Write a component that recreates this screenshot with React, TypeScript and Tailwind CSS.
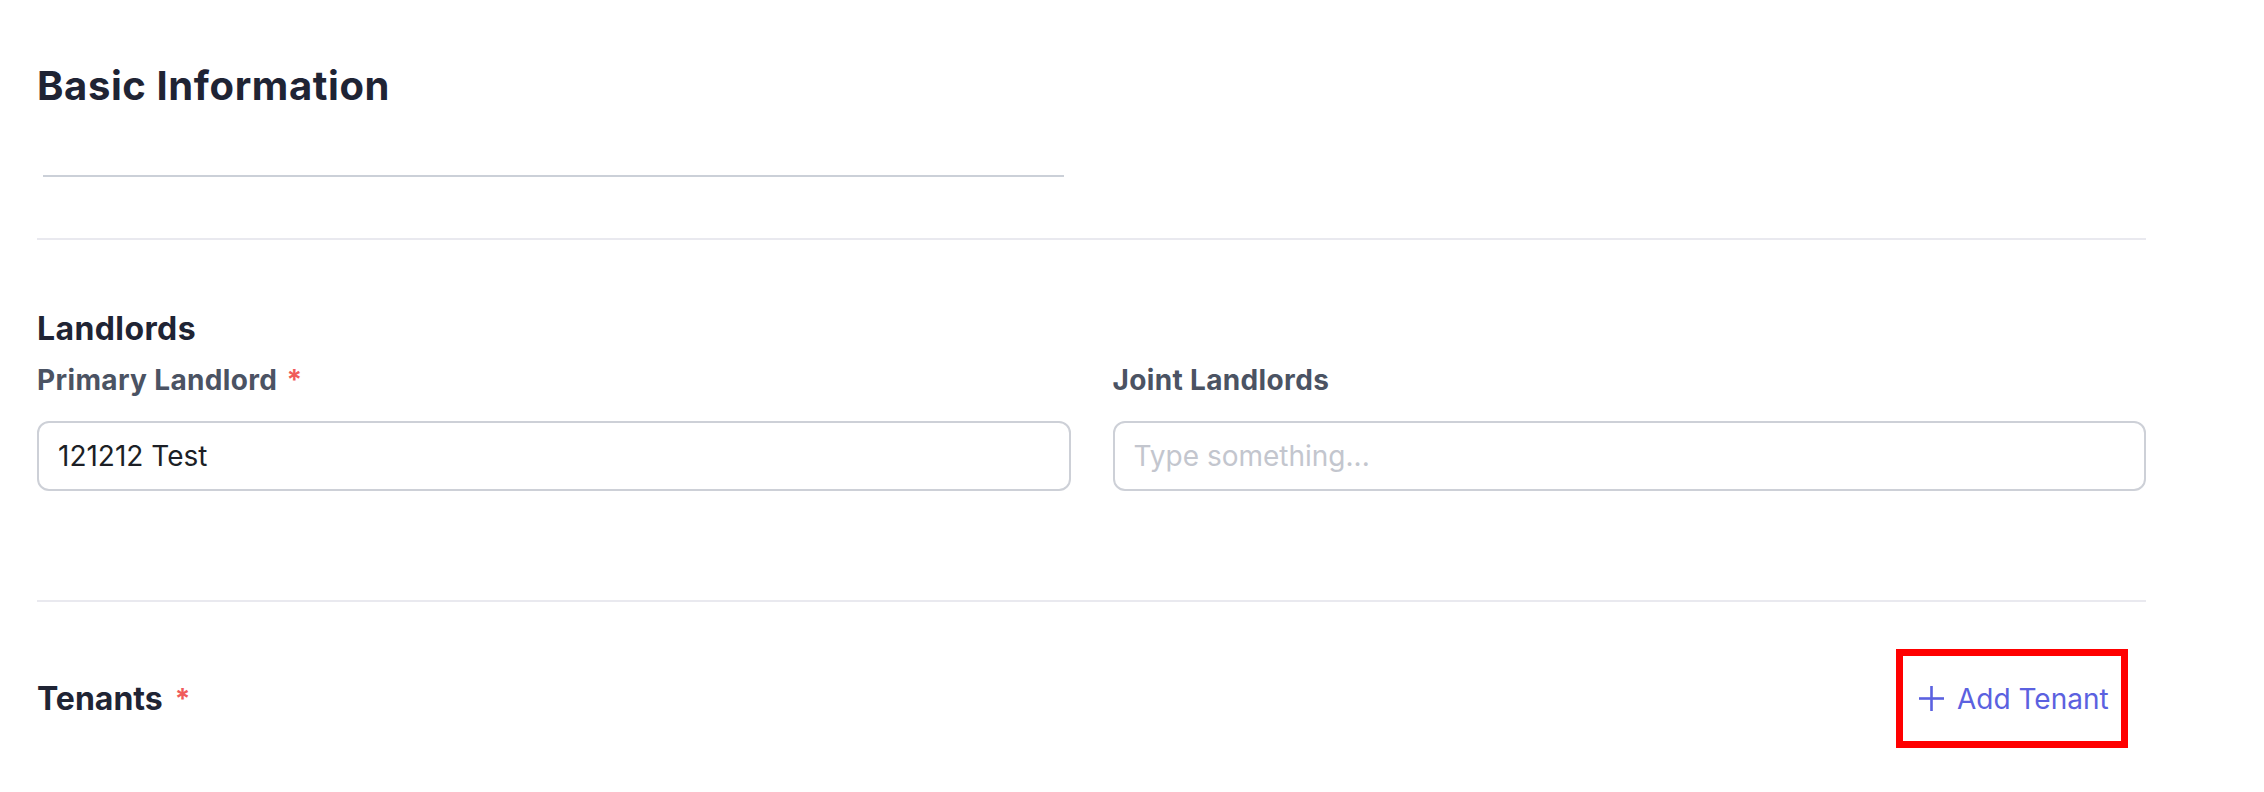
type FieldProps = {
  label: string;
  required?: boolean;
  value?: string;
  placeholder?: string;
};

function Field({ label, required, value, placeholder }: FieldProps) {
  return (
    <div className="flex flex-col">
      <label className="flex items-center text-[28px] leading-[28px] font-bold tracking-[0.35px] text-[#4b5363]">
        {label}
        {required ? <span className="ml-[9px] text-[#f05a5a]">*</span> : null}
      </label>
      <input
        readOnly
        defaultValue={value}
        placeholder={placeholder}
        className="mt-[27px] h-[70px] w-full rounded-[12px] border-2 border-[#cdd0d7] bg-white px-[19px] text-[28px] text-[#1c1f26] outline-none placeholder:text-[#c3c6ce]"
      />
    </div>
  );
}

function PlusIcon() {
  return (
    <svg width="29" height="29" viewBox="0 0 29 29" fill="none" stroke="#5b61e0" strokeWidth="2.6">
      <path d="M14.5 2v25" />
      <path d="M2 14.5h25" />
    </svg>
  );
}

export default function App() {
  return (
    <div className="min-h-screen bg-white font-['Inter',sans-serif]">
      <div className="ml-[37px] w-[2109px] pt-[66px]">
        <h1 className="text-[40px] leading-[40px] font-bold tracking-[0.6px] text-[#1f2434]">Basic Information</h1>
        <div className="mt-[69px] ml-[6px] h-[2px] w-[1021px] bg-[#cbd0d8]" />

        <div className="mt-[61px] h-[2px] bg-[#e9e9ef]" />

        <h2 className="mt-[73px] text-[32px] leading-[32px] font-bold tracking-[0.4px] text-[#1f2434]">Landlords</h2>
        <div className="mt-[21px] grid grid-cols-2 gap-[42px]">
          <Field label="Primary Landlord" required value="121212 Test" />
          <Field label="Joint Landlords" placeholder="Type something..." />
        </div>

        <div className="mt-[109px] h-[2px] bg-[#e9e9ef]" />

        <div className="mt-[47px] flex items-center justify-between">
          <h2 className="flex items-center text-[32px] leading-[32px] font-bold text-[#1f2434]">
            Tenants
            <span className="ml-[12px] text-[28px] text-[#f05a5a]">*</span>
          </h2>
          <div className="mr-[18px] flex h-[99px] w-[232px] items-center border-[7px] border-[#ff0000] pl-[14px]">
            <button className="flex items-center gap-[11px] text-[28px] leading-[28px] text-[#5b61e0]">
              <PlusIcon />
              <span>Add Tenant</span>
            </button>
          </div>
        </div>
      </div>
    </div>
  );
}
